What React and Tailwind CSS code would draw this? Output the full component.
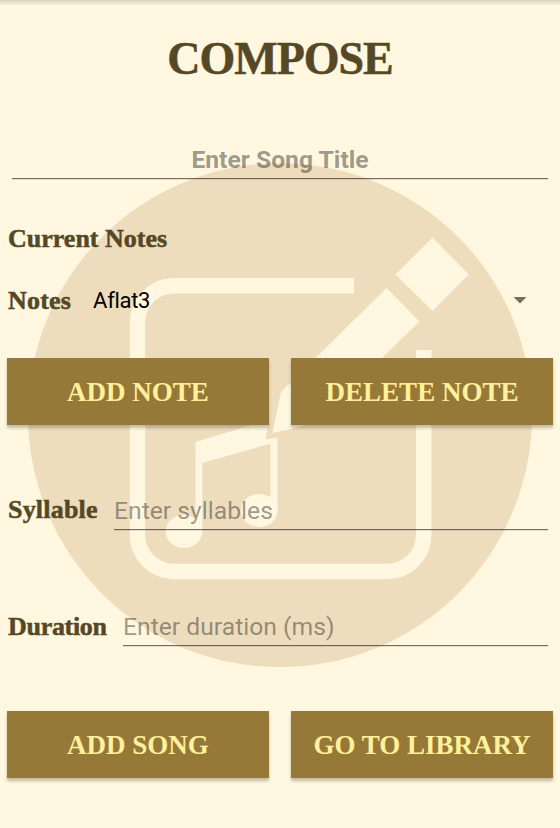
const labelFont = "font-['Liberation_Serif',serif] font-bold text-[#554826] [-webkit-text-stroke:0.5px_#554826]";

const fieldLine = "border-b border-black/55 shadow-[0_1px_0_rgba(0,0,0,0.1)]";

function Label({ children, className = "" }) {
  return (
    <span className={`${labelFont} text-[26px] leading-8 whitespace-nowrap ${className}`}>
      {children}
    </span>
  );
}

function ActionButton({ children }) {
  return (
    <button className="h-[67px] w-[262px] bg-[#967938] pt-0.5 font-['Liberation_Serif',serif] text-[27px] leading-none font-bold whitespace-nowrap text-[#fff19b] shadow-[0_3px_3px_rgba(60,50,30,0.3)]">
      {children}
    </button>
  );
}

function Watermark() {
  return (
    <svg className="absolute inset-0 -z-10" width="560" height="828" viewBox="0 0 560 828" fill="none">
      <circle cx="280" cy="415.2" r="252" fill="#eeddbd" />
      <path
        d="M354 285.7H174a36.5 36.5 0 0 0-36.5 36.5V535a36.5 36.5 0 0 0 36.5 36.5H387.2a36.5 36.5 0 0 0 36.5-36.5V350"
        stroke="#fff7df"
        strokeWidth="15.5"
      />
      <g fill="#fff7df">
        <path d="M432.5 237.5L468.7 274.5L432.5 311L395.5 274.5Z" />
        <path d="M386.5 288L419.5 321.5L316 422L297 427.5L272.5 433L281 392Z" />
        <path d="M195.5 442L252 425L269 420L265.5 439.5L277.5 437.5V511H270.5V443.5L202.3 463V531H195.5Z" />
        <ellipse cx="184" cy="531.5" rx="18.4" ry="16.5" />
        <ellipse cx="259.2" cy="510.5" rx="18.4" ry="16.5" />
      </g>
    </svg>
  );
}

export default function App() {
  return (
    <main className="relative isolate flex h-[828px] w-[560px] flex-col overflow-hidden bg-[#fff7df] font-[Roboto,sans-serif]">
      <Watermark />
      <div className="h-[6px] shrink-0 bg-linear-to-b from-[#d8d1bd] to-[#fff7df]" />
      <h1 className={`${labelFont} mt-6 h-[58px] text-center text-[46px] leading-[58px] tracking-[-1px]`}>
        COMPOSE
      </h1>
      <div className={`mx-3 mt-[52px] h-[39px] text-center text-[24.7px] leading-10 font-bold text-black/40 ${fieldLine}`}>
        Enter Song Title
      </div>
      <Label className="mt-11 ml-2">Current Notes</Label>
      <div className="mt-[30px] flex h-8 items-center pr-[33px] pl-2">
        <Label className="tracking-[0.2px]">Notes</Label>
        <span className="mb-px ml-[22px] text-[22px] tracking-[-0.3px] text-black">Aflat3</span>
        <svg className="mb-0.5 ml-auto" width="14" height="7" viewBox="0 0 14 7">
          <path d="M0.5 0H13.5L7 6.5Z" fill="#77705f" />
        </svg>
      </div>
      <div className="mt-[41px] flex justify-between px-[7px]">
        <ActionButton>ADD NOTE</ActionButton>
        <ActionButton>DELETE NOTE</ActionButton>
      </div>
      <div className="mt-[65px] flex h-10 pr-3 pl-2">
        <Label className="mt-1 w-[106px] tracking-[0.2px]">Syllable</Label>
        <div className={`h-10 flex-1 text-[24.7px] leading-[42px] text-black/40 ${fieldLine}`}>
          Enter syllables
        </div>
      </div>
      <div className="mt-[76px] flex h-10 pr-3 pl-2">
        <Label className="mt-[5px] w-[115px] tracking-[-0.3px]">Duration</Label>
        <div className={`h-10 flex-1 text-[24.7px] leading-[42px] text-black/40 ${fieldLine}`}>
          Enter duration (ms)
        </div>
      </div>
      <div className="mt-[65px] flex justify-between px-[7px]">
        <ActionButton>ADD SONG</ActionButton>
        <ActionButton>GO TO LIBRARY</ActionButton>
      </div>
    </main>
  );
}
